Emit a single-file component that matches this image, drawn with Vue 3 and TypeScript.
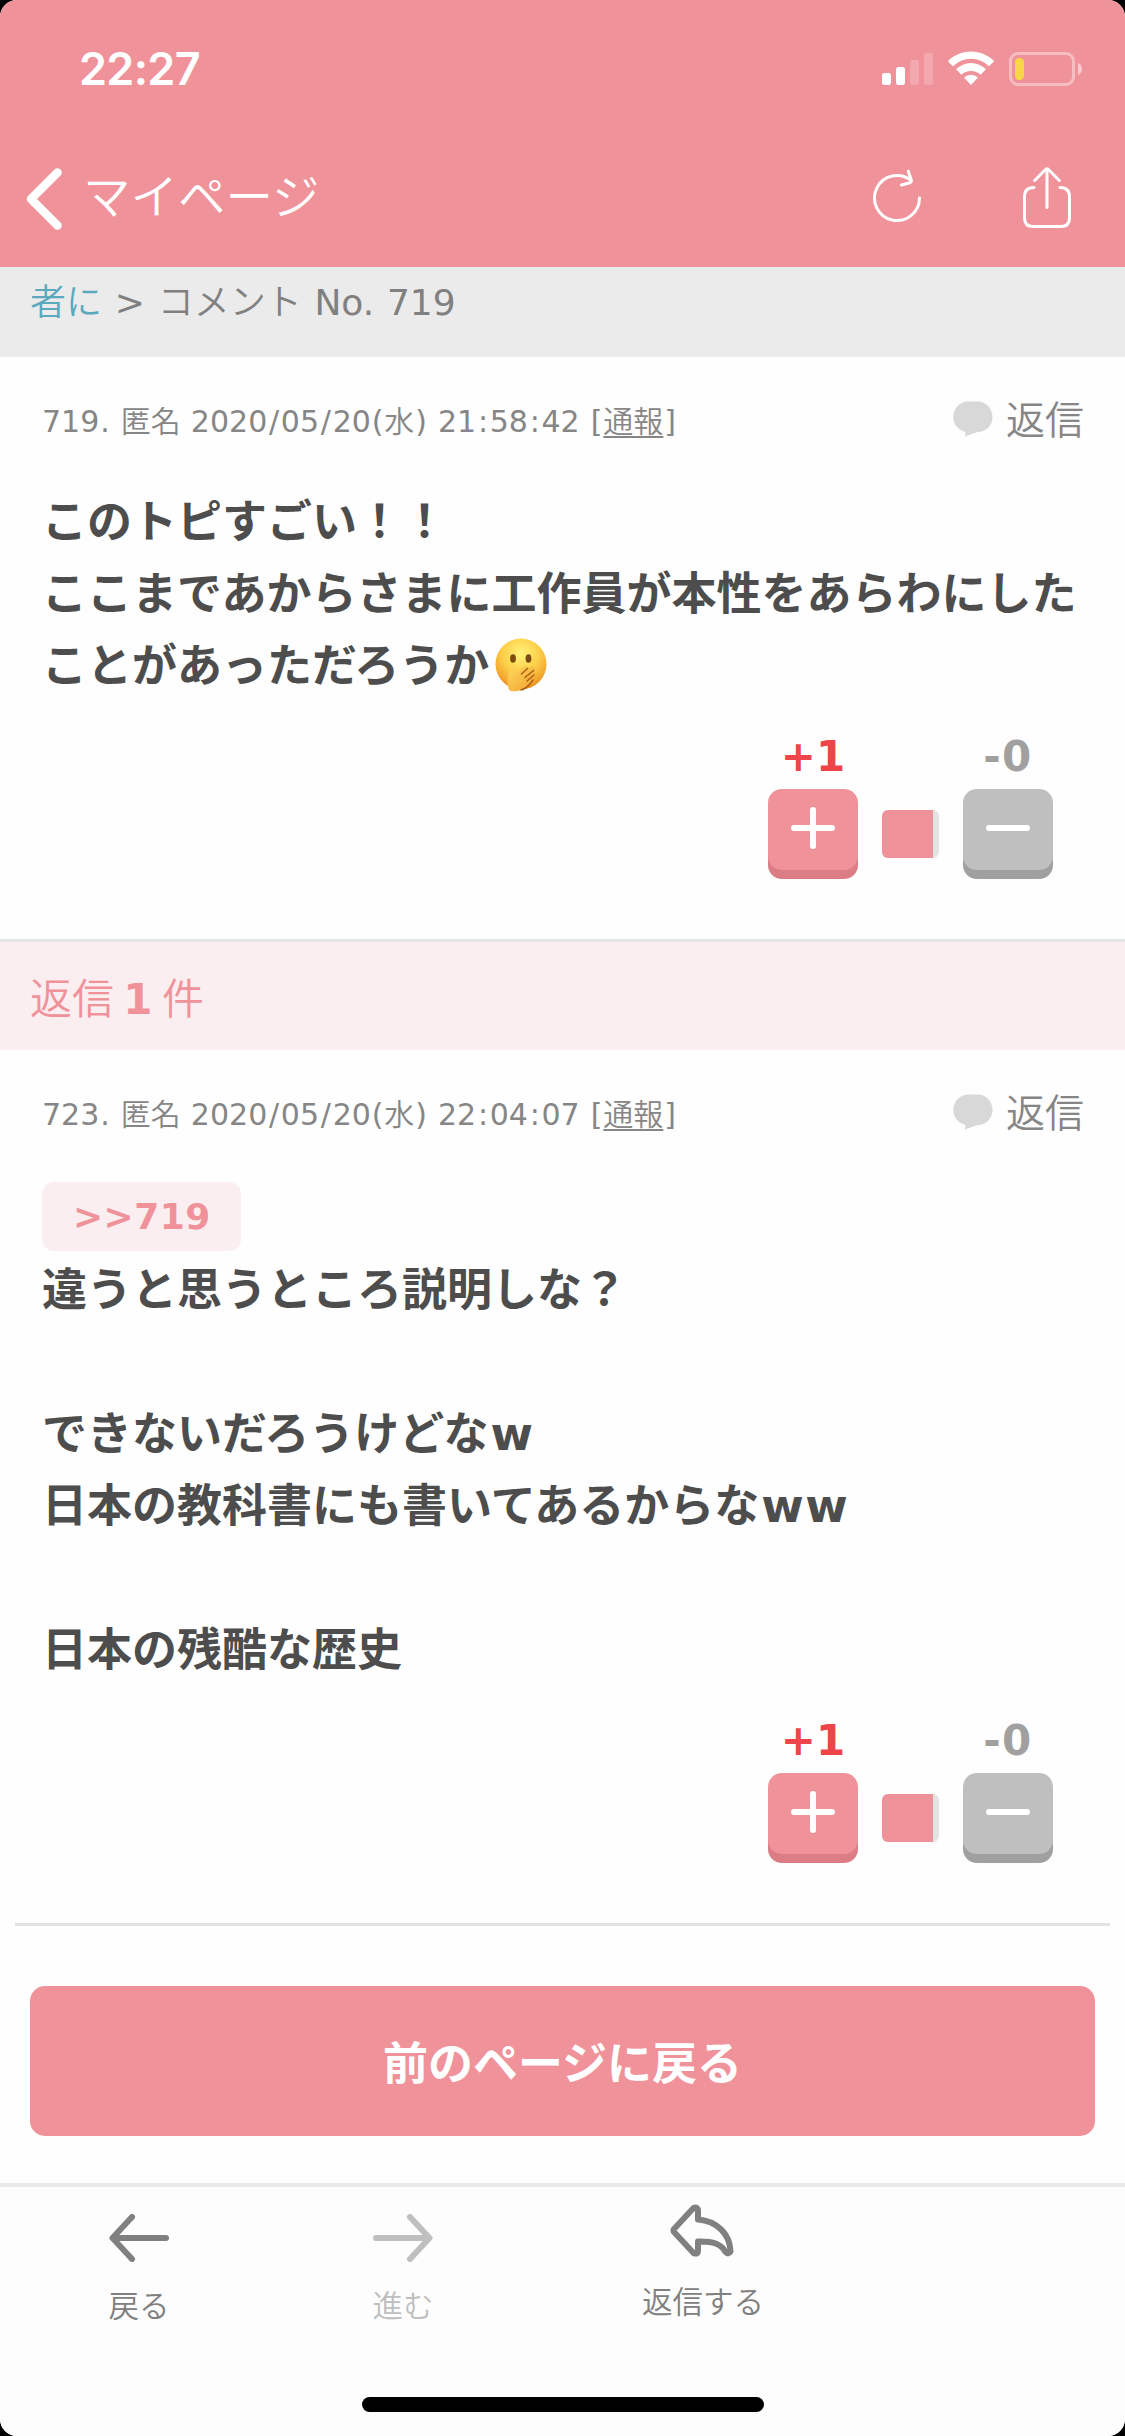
<script setup lang="ts">
interface Comment {
  no: number
  date: string
  anchor?: string
  lines: string[]
  emoji?: boolean
  plus: number
  minus: number
}

interface Piece {
  text: string
  kind: string
}

const comments: Comment[] = [
  {
    no: 719,
    date: '2020/05/20(水) 21:58:42',
    lines: ['このトピすごい！！', 'ここまであからさまに工作員が本性をあらわにした', 'ことがあっただろうか'],
    emoji: true,
    plus: 1,
    minus: 0,
  },
  {
    no: 723,
    date: '2020/05/20(水) 22:04:07',
    anchor: '>>719',
    lines: ['違うと思うところ説明しな？', '', 'できないだろうけどなw', '日本の教科書にも書いてあるからなww', '', '日本の残酷な歴史'],
    plus: 1,
    minus: 0,
  },
]

// Splits a string so that kanji and punctuation get their own weight and spacing.
function pieces(text: string): Piece[] {
  return (text.match(/[\u3000-\u9fff]+|[/:]|[()[\].]|[^\u3000-\u9fff/:()[\].]+/g) ?? []).map((t) => ({
    text: t,
    kind: /[\u3000-\u9fff]/.test(t) ? 'kanji' : /[/:]/.test(t) ? 'sep' : /[()[\].]/.test(t) ? 'paren' : 'latin',
  }))
}
</script>

<template>
  <div class="device">
    <div class="screen">
      <header class="header">
        <div class="status">
          <span class="time">22:27</span>
          <svg class="status-icons" width="202" height="36" viewBox="0 0 202 36">
            <g fill="#fff">
              <rect x="0" y="22" width="9" height="12" rx="2.5" />
              <rect x="14" y="16" width="9" height="18" rx="2.5" />
              <rect x="28" y="9" width="9" height="25" rx="2.5" opacity=".2" />
              <rect x="42" y="2" width="9" height="32" rx="2.5" opacity=".2" />
              <path d="M66 10.5Q67 8.500 70 6.400A33 33 0 0 1 108 6.400Q111 8.500 112 10.500L107 15.300A25 25 0 0 0 71 15.300Z" />
              <path d="M74 18.300A21 21 0 0 1 104 18.300L98.500 23.700A14 14 0 0 0 79.500 23.700Z" />
              <path d="M82 26.500A10.500 10.500 0 0 1 96 26.500L89 34Z" />
              <path d="M196 12a6.500 6.500 0 0 1 0 12Z" opacity=".5" />
            </g>
            <rect x="128.500" y="2.500" width="63" height="31" rx="7.500" fill="none" stroke="#fff" stroke-width="3" opacity=".4" />
            <rect x="133" y="7" width="9" height="22" rx="4.200" fill="#f8d648" />
          </svg>
        </div>
        <div class="nav">
          <svg width="38" height="64" viewBox="0 0 38 64">
            <path d="M32.500 5.500L6 32L32.500 58.500" fill="none" stroke="#fff" stroke-width="8.500" stroke-linecap="round" stroke-linejoin="round" />
          </svg>
          <span class="nav-title">マイページ</span>
          <svg class="reload" width="50" height="56" viewBox="0 0 50 56">
            <g fill="none" stroke="#fff" stroke-width="3" stroke-linecap="round" stroke-linejoin="round">
              <path d="M47.500 29A22.500 22.500 0 1 1 39 11.400" />
              <path d="M36.300 2.200L39.400 11.400Q39.600 13 38 13.700L29.500 16" />
            </g>
          </svg>
          <svg class="share" width="50" height="64" viewBox="0 0 50 64">
            <g fill="none" stroke="#fff" stroke-width="3" stroke-linecap="round" stroke-linejoin="round">
              <path d="M12 21.500Q2.500 21.500 2.500 31V52Q2.500 60.500 11 60.500H39Q47.500 60.500 47.500 52V31Q47.500 21.500 38 21.500" />
              <path d="M25 3V41.500M12.700 14.500L23.500 3.500Q25 2 26.500 3.500L37.300 14.500" />
            </g>
          </svg>
        </div>
      </header>

      <div class="crumbs"><a class="kanji">者に</a> &gt; <span class="kanji">コメント</span> No. 719</div>

      <template v-for="(c, i) in comments" :key="c.no">
        <div v-if="i === 1" class="replies">返信 <b>1</b> 件</div>
        <article class="comment" :class="{ last: i === 1 }">
          <div class="meta">
            <span class="info"><span v-for="(p, k) in pieces(`${c.no}. 匿名 ${c.date} [`)" :key="k" :class="p.kind">{{ p.text }}</span><u class="kanji">通報</u><span class="paren">]</span></span>
            <span class="reply kanji">
              <svg width="40" height="36" viewBox="0 0 40 36">
                <path d="M15 .5H25C33 .5 39.500 7.500 39.500 16C39.500 24.500 33 31 25 31Q22 31.500 12 35.700L12.500 31C5 29 .3 23.500 .3 16C.3 7.500 7 .5 15 .5Z" fill="#d8d8d8" />
              </svg>
              返信
            </span>
          </div>
          <div class="body">
            <div v-if="c.anchor" class="line quote"><span class="anchor">{{ c.anchor }}</span></div>
            <div v-for="(l, n) in c.lines" :key="n" class="line">
              <span>{{ l.replace(/w+$/, '') }}<span v-if="l.endsWith('w')" class="laugh">{{ l.match(/w+$/)?.[0] }}</span></span>
              <svg v-if="c.emoji && n === c.lines.length - 1" class="emoji" width="52" height="54" viewBox="0 0 52 54">
                <defs>
                  <radialGradient id="face" cx=".5" cy=".3" r=".7">
                    <stop offset="0" stop-color="#fff27a" />
                    <stop offset=".5" stop-color="#fdd04a" />
                    <stop offset=".85" stop-color="#f3a52d" />
                    <stop offset="1" stop-color="#e48a1c" />
                  </radialGradient>
                  <linearGradient id="hand" x1="0" y1="0" x2="1" y2="1">
                    <stop offset="0" stop-color="#ffd960" />
                    <stop offset="1" stop-color="#f1a02c" />
                  </linearGradient>
                </defs>
                <circle cx="26" cy="26" r="25.500" fill="url(#face)" />
                <ellipse cx="18" cy="20.500" rx="2.900" ry="4.300" fill="#7b4a10" />
                <ellipse cx="33.500" cy="20.500" rx="2.900" ry="4.300" fill="#7b4a10" />
                <path d="M14 52C11 43 13 36 16.500 29Q19 27 19.500 31L19 36L29 28.500Q33 27 32.500 30.500L37 28Q41 28.500 38.500 32.500Q42 33 39 37Q41.500 39 38 42C35 47 29 52 22 53Q16 54 14 52Z" fill="url(#hand)" />
                <path d="M32.500 30.500L26.500 36M38.500 32.500L30 39.500M39 37L32 43M38 42C34 48 30 51 26 52" fill="none" stroke="#a95e13" stroke-width="1.400" stroke-linecap="round" />
              </svg>
            </div>
          </div>
          <div class="votes">
            <div class="vote">
              <span class="count plus">+{{ c.plus }}</span>
              <span class="key pink">
                <svg width="44" height="42" viewBox="0 0 44 42"><path d="M3 21H41M22 3V39" stroke="#fff" stroke-width="6" stroke-linecap="round" /></svg>
              </span>
            </div>
            <span class="ratio"><i></i></span>
            <div class="vote">
              <span class="count minus">-{{ c.minus }}</span>
              <span class="key gray">
                <svg width="44" height="42" viewBox="0 0 44 42"><path d="M3 21H41" stroke="#fff" stroke-width="6" stroke-linecap="round" /></svg>
              </span>
            </div>
          </div>
        </article>
      </template>

      <div class="back-button">前のページに戻る</div>

      <footer class="toolbar">
        <div class="tool back">
          <svg width="60" height="48" viewBox="0 0 60 48">
            <path d="M57 24H4M23 3L3.500 24L23 45" fill="none" stroke="currentColor" stroke-width="6" stroke-linecap="round" stroke-linejoin="round" />
          </svg>
          <span>戻る</span>
        </div>
        <div class="tool forward">
          <svg width="60" height="48" viewBox="0 0 60 48">
            <path d="M3 24H56M37 3L56.500 24L37 45" fill="none" stroke="currentColor" stroke-width="6" stroke-linecap="round" stroke-linejoin="round" />
          </svg>
          <span>進む</span>
        </div>
        <div class="tool answer">
          <svg width="66" height="54" viewBox="0 0 66 54">
            <path d="M23.500 4L4 25Q3 26.500 4 28L23.500 49Q28 51 28 46.500V37.500C43 37 51 40 55.500 48Q58.500 51 60.500 47.500C60 30 47 17 28 15.500V7Q28 2.500 23.500 4Z" fill="none" stroke="currentColor" stroke-width="6" stroke-linejoin="round" />
          </svg>
          <span>返信する</span>
        </div>
        <div class="home"></div>
      </footer>
    </div>
  </div>
</template>

<style>
body {
  margin: 0;
  background: #000;
}
</style>

<style scoped>
.device {
  width: 1125px;
  height: 2436px;
  background: #000;
  font-family: "DejaVu Sans", "Noto Sans CJK JP", sans-serif;
}
.screen {
  height: 2436px;
  border-radius: 17px;
  overflow: hidden;
  background: #fefefe;
  display: flex;
  flex-direction: column;
}
.kanji {
  font-weight: 350;
}
.header {
  height: 267px;
  flex: none;
  background: #f0929a;
  color: #fff;
}
.status {
  height: 137px;
  box-sizing: border-box;
  padding: 41px 41px 0 79px;
  display: flex;
  justify-content: space-between;
  align-items: flex-start;
}
.time {
  font: 600 45px/56px Inter, sans-serif;
  letter-spacing: -0.700px;
}
.status-icons {
  margin-top: 10px;
}
.nav {
  display: flex;
  align-items: center;
  height: 123px;
  padding: 0 53px 0 25px;
}
.nav-title {
  font: 350 47.500px/60px "Noto Sans CJK JP", sans-serif;
  margin-left: 20px;
  margin-top: -9px;
  flex: 1;
}
.reload {
  margin-right: 100px;
  margin-top: -3px;
}
.share {
  margin-top: -2px;
}
.crumbs {
  height: 90px;
  box-sizing: border-box;
  flex: none;
  background: #ebebeb;
  color: #808080;
  font-size: 36px;
  line-height: 44px;
  padding: 14px 30px 0;
  word-spacing: 1.300px;
  white-space: pre;
}
.crumbs a {
  color: #5aa9bd;
}
.comment {
  flex: none;
  height: 582px;
  box-sizing: border-box;
  padding: 34px 42px 0;
}
.comment.last {
  height: 876px;
  padding: 34px 27px 0;
  margin: 0 15px;
  border-bottom: 3px solid #e3e3e3;
}
.meta {
  display: flex;
  justify-content: space-between;
  align-items: center;
  height: 60px;
  color: #868686;
}
.info {
  font-size: 30px;
  word-spacing: 0.600px;
  margin-top: -4px;
  white-space: pre;
}
.info u {
  text-underline-offset: 4px;
  text-decoration-thickness: 2px;
}
.sep {
  padding: 0 1.750px;
}
.paren {
  padding: 0 0.900px;
}
.reply {
  display: flex;
  align-items: center;
  gap: 13px;
  margin-right: -1px;
  font-size: 39px;
  line-height: 60px;
}
.reply svg {
  margin-top: -5px;
}
.body {
  margin-top: 36px;
  color: #4d4d4d;
  font-weight: 700;
  font-size: 45px;
}
.line {
  height: 72px;
  line-height: 72px;
  display: flex;
  align-items: center;
  white-space: pre;
}
.line.quote {
  align-items: flex-start;
  box-sizing: border-box;
  height: 75px;
  padding-top: 2px;
}
.laugh {
  font-size: 46px;
  line-height: 1;
  letter-spacing: 1.500px;
  padding-left: 2px;
}
.emoji {
  margin-left: 6px;
  margin-top: -4px;
}
.anchor {
  height: 69px;
  line-height: 69px;
  padding: 0 30px 0 31px;
  border-radius: 12px;
  background: #fbeef0;
  color: #f0929a;
  font-size: 36px;
  letter-spacing: 0.450px;
}
.votes {
  display: flex;
  justify-content: flex-end;
  align-items: flex-end;
  gap: 24px;
  padding: 29px 30px 0 0;
}
.vote {
  width: 90px;
  display: flex;
  flex-direction: column;
  align-items: center;
}
.count {
  color: #a0a0a0;
  font-size: 42px;
  font-weight: 700;
  line-height: 50px;
  margin-bottom: 7px;
}
.count.plus {
  color: #ef444a;
}
.count.minus {
  letter-spacing: 1.500px;
}
.key {
  width: 90px;
  height: 81px;
  border-radius: 14px;
  margin-bottom: 9px;
  display: flex;
  align-items: center;
  justify-content: center;
}
.key svg {
  margin-top: -3px;
}
.pink {
  background: #f0929a;
  box-shadow: 0 9px 0 #dc7d85;
}
.gray {
  background: #bfbfbf;
  box-shadow: 0 9px 0 #a0a0a0;
}
.ratio {
  width: 57px;
  height: 48px;
  margin-bottom: 21px;
  border-radius: 6px;
  overflow: hidden;
  background: #e3e3e3;
}
.ratio i {
  display: block;
  width: 51px;
  height: 48px;
  background: #f0929a;
}
.replies {
  flex: none;
  height: 111px;
  box-sizing: border-box;
  border-top: 3px solid #e5e5e5;
  background: #fbeef0;
  color: #f0929a;
  padding-left: 30px;
  font-size: 42px;
  font-weight: 350;
  line-height: 115px;
  word-spacing: -4px;
}
.replies b {
  font-weight: 700;
}
.back-button {
  flex: none;
  margin: 60px 30px 0;
  height: 150px;
  border-radius: 15px;
  background: #f0929a;
  color: #fff;
  font: 700 45px/149px "Noto Sans CJK JP", sans-serif;
  text-align: center;
}
.toolbar {
  position: relative;
  margin-top: 47px;
  flex: 1;
  border-top: 4px solid #e9e9e9;
  background: #fdfdfd;
  display: flex;
  align-items: flex-start;
  color: #808080;
  font-size: 30.500px;
  font-weight: 350;
  line-height: 40px;
}
.tool {
  display: flex;
  flex-direction: column;
  align-items: center;
  white-space: nowrap;
}
.tool span {
  margin: 0 -10px;
}
.back {
  margin: 27px 0 0 109px;
  gap: 25px;
}
.forward {
  margin: 27px 0 0 204px;
  gap: 25px;
  color: #bfbfbf;
}
.answer {
  width: 122px;
  margin: 17px 0 0 209px;
  gap: 25px;
}
.home {
  position: absolute;
  left: 362px;
  bottom: 24px;
  width: 402px;
  height: 15px;
  border-radius: 8px;
  background: #000;
}
</style>
